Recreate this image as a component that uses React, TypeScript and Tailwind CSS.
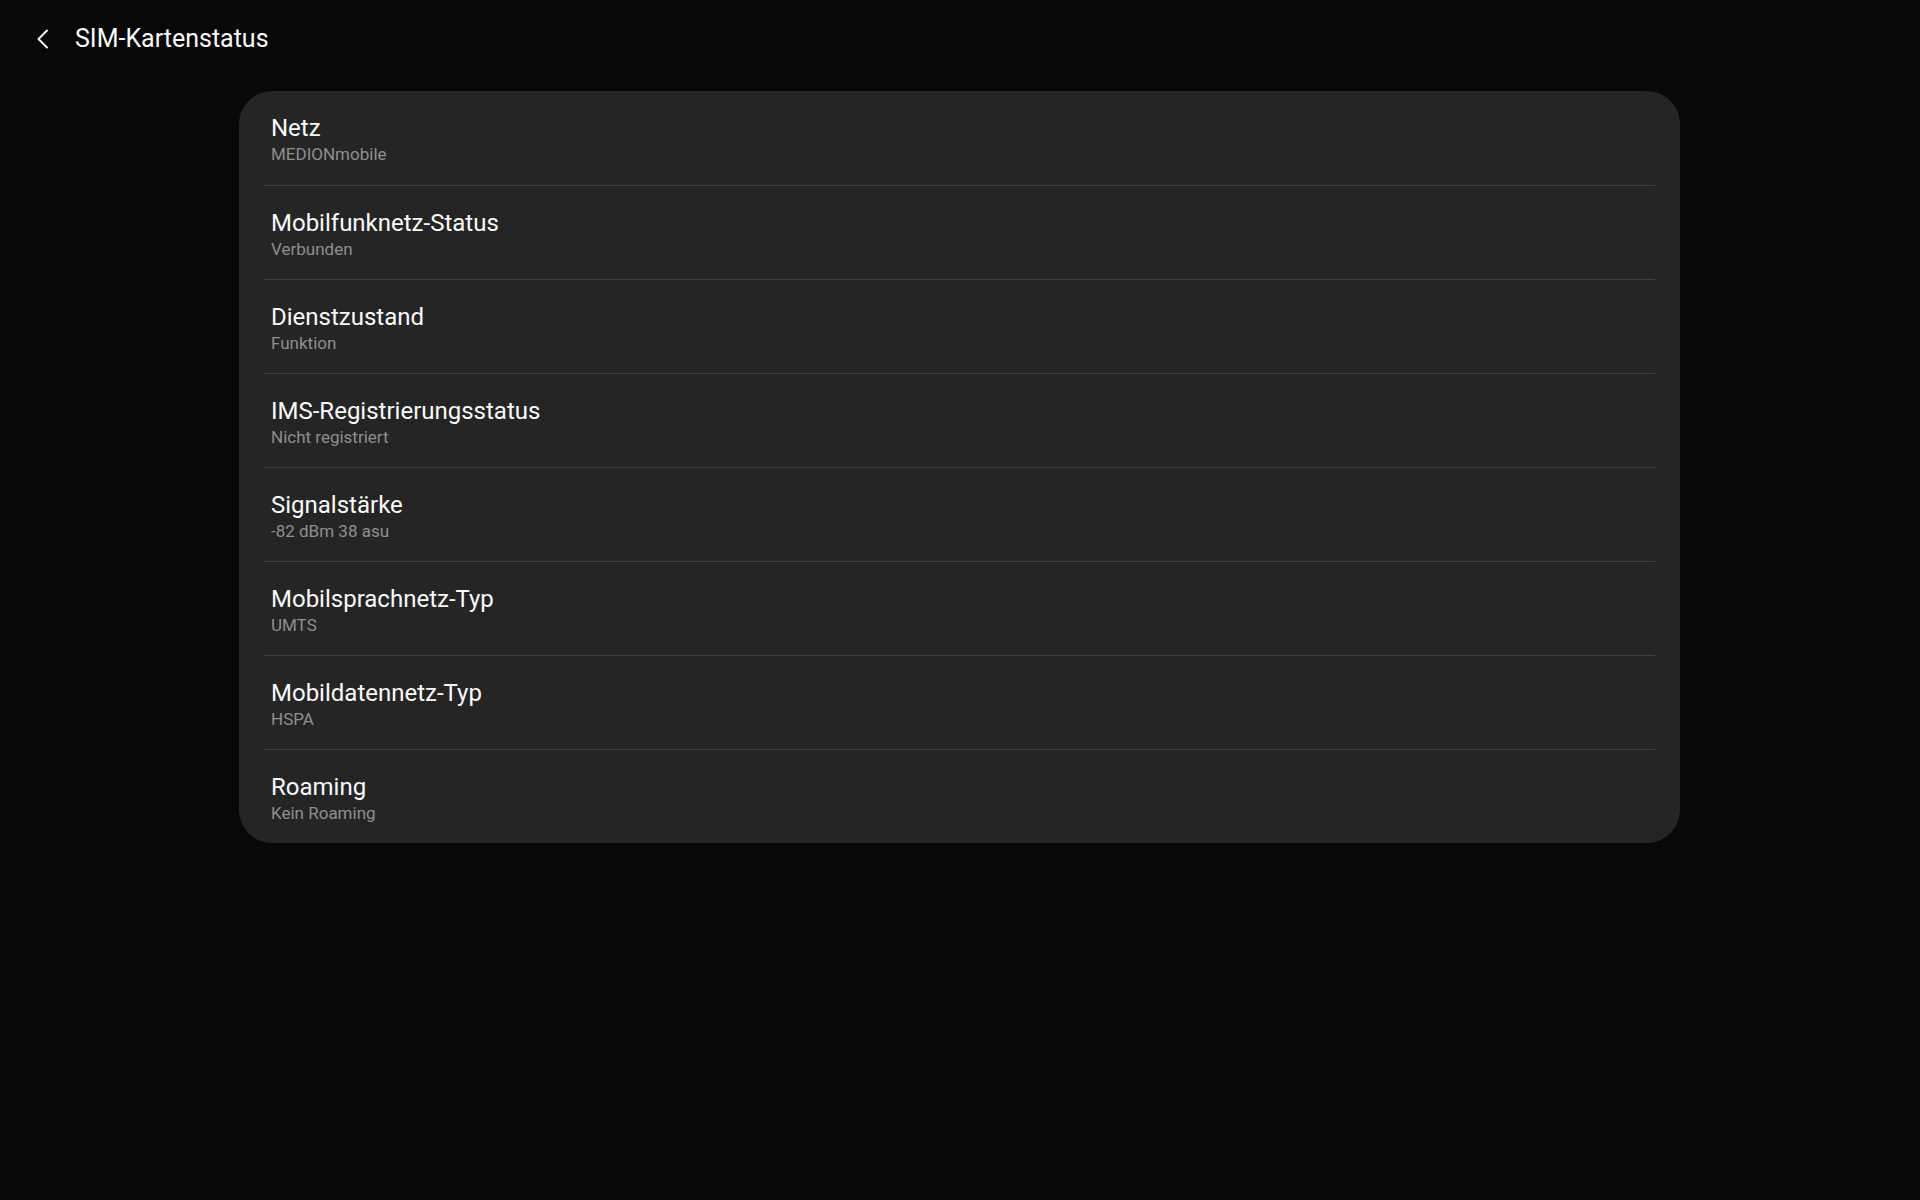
const rows = [
  { title: 'Netz', value: 'MEDIONmobile' },
  { title: 'Mobilfunknetz-Status', value: 'Verbunden' },
  { title: 'Dienstzustand', value: 'Funktion' },
  { title: 'IMS-Registrierungsstatus', value: 'Nicht registriert' },
  { title: 'Signalstärke', value: '-82 dBm 38 asu' },
  { title: 'Mobilsprachnetz-Typ', value: 'UMTS' },
  { title: 'Mobildatennetz-Typ', value: 'HSPA' },
  { title: 'Roaming', value: 'Kein Roaming' },
];

export default function App() {
  return (
    <main className="min-h-screen bg-[#080808] font-['Roboto',sans-serif] text-[#fafafa]">
      <header className="flex h-[76px] items-center pl-[31px] pt-[2px]">
        <button className="flex h-[24px] w-[24px] items-center justify-center">
          <svg width="16" height="20" viewBox="0 0 16 20" fill="none">
            <path d="M12 1.5 L3.5 10 L12 18.5" stroke="#f2f2f2" strokeWidth="2" strokeLinecap="round" strokeLinejoin="round" />
          </svg>
        </button>
        <h1 className="ml-[20px] text-[25px] leading-[30px]">SIM-Kartenstatus</h1>
      </header>

      <section className="mx-[239px] mt-[15px] w-[1441px] overflow-hidden rounded-[33px] bg-[#252525] px-[25px]">
        {rows.map((r, i) => (
          <div
            key={r.title}
            className={
              i === 0
                ? 'flex h-[94px] flex-col pl-[7px] pt-[22px]'
                : 'flex h-[94px] flex-col border-t border-[#3f3f3f] pl-[7px] pt-[22px]'
            }
          >
            <span className="text-[24px] leading-[30px]">{r.title}</span>
            <span className="text-[17px] leading-[22px] text-[#8f8f8f]">{r.value}</span>
          </div>
        ))}
      </section>
    </main>
  );
}
